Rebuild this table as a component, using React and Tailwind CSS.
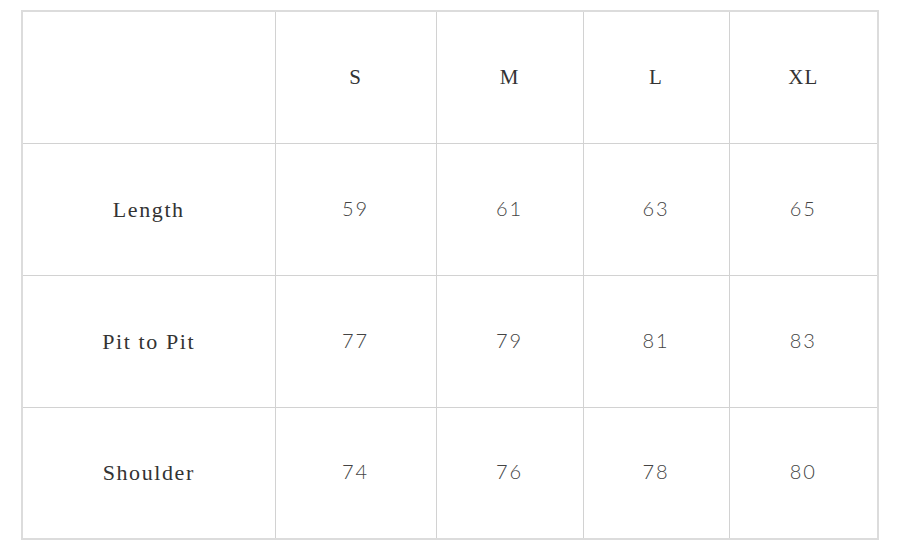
import React from 'react'

const sizes = ['S', 'M', 'L', 'XL']
const rows = [
  { label: 'Length', values: [59, 61, 63, 65] },
  { label: 'Pit to Pit', values: [77, 79, 81, 83] },
  { label: 'Shoulder', values: [74, 76, 78, 80] },
]

const serif = "font-['Liberation_Serif','Times_New_Roman',serif]"
const sans = "font-['Lato','Open_Sans',sans-serif]"

const App = () => {
  return (
    <div className="w-[909px] h-[556px] bg-white pt-[10px] pl-[21px]">
      <table className="border-collapse table-fixed w-[858px] border-2 border-[#dcdcdc]">
        <colgroup>
          <col className="w-[253px]" />
          <col className="w-[161px]" />
          <col className="w-[147px]" />
          <col className="w-[146px]" />
          <col className="w-[149px]" />
        </colgroup>
        <tbody>
          <tr className="h-[132px]">
            <td className="border border-[#d2d2d2]" />
            {sizes.map((s) => (
              <td
                key={s}
                className={`border border-[#d2d2d2] text-center text-[21px] tracking-[1px] text-[#333] ${serif}`}
              >
                {s}
              </td>
            ))}
          </tr>
          {rows.map((row) => (
            <tr key={row.label} className="h-[132px]">
              <td className={`border border-[#d2d2d2] text-center text-[22px] tracking-[1.6px] text-[#333] ${serif}`}>
                {row.label}
              </td>
              {row.values.map((v, i) => (
                <td
                  key={i}
                  className={`border border-[#d2d2d2] text-center text-[20px] font-light tracking-[2px] text-[#444] pb-[3px] ${sans}`}
                >
                  {v}
                </td>
              ))}
            </tr>
          ))}
        </tbody>
      </table>
    </div>
  )
}

export default App
